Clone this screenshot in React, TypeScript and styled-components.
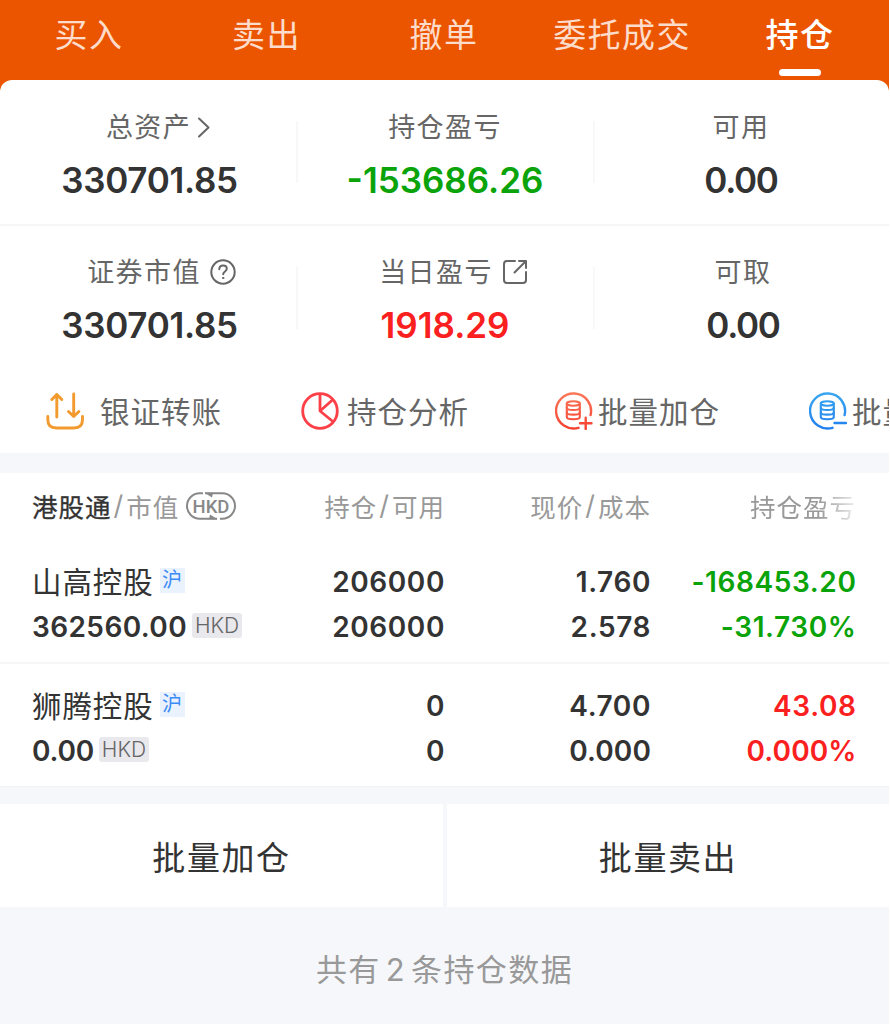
import React from "react";
import styled, { createGlobalStyle } from "styled-components";

const GlobalStyle = createGlobalStyle`
  * { box-sizing: border-box; }
  body { margin: 0; background: #fff; }
`;

const Page = styled.div`
  width: 889px;
  height: 1024px;
  overflow: hidden;
  display: flex;
  flex-direction: column;
  background: #f6f7fa;
  color: #333;
  font-family: Inter, "Noto Sans CJK SC", sans-serif;
  white-space: nowrap;
`;

const Tabs = styled.nav`
  height: 92px;
  flex: none;
  display: grid;
  grid-template-columns: 178px 177px 178px 178px 178px;
  background: #eb5500;
`;

const Tab = styled.div<{ $active?: boolean }>`
  display: flex;
  flex-direction: column;
  align-items: center;
  font-size: 33px;
  letter-spacing: 1.4px;
  line-height: 50px;
  padding-top: 10px;
  font-weight: ${(p) => (p.$active ? 500 : 400)};
  color: ${(p) => (p.$active ? "#fff" : "#fddccb")};
`;

const TabMark = styled.i`
  width: 42px;
  height: 7px;
  margin-top: 9px;
  border-radius: 4px;
  background: #fff;
`;

const Summary = styled.section`
  height: 373px;
  flex: none;
  margin-top: -12px;
  border-radius: 12px 12px 0 0;
  background: #fff;
`;

const StatRow = styled.div<{ $line?: boolean }>`
  height: ${(p) => (p.$line ? 146 : 145)}px;
  display: grid;
  grid-template-columns: 298px 297px 294px;
  border-bottom: ${(p) => (p.$line ? "2px solid #f6f6f7" : "none")};
`;

const Stat = styled.div<{ $left?: number; $right?: number; $top?: number }>`
  display: flex;
  flex-direction: column;
  align-items: center;
  padding: ${(p) => p.$top ?? 25}px ${(p) => p.$right ?? 0}px 0 ${(p) => p.$left ?? 0}px;
  background: linear-gradient(#f8f8f8, #f8f8f8) right 41px / 2px 62px no-repeat;
  &:last-child { background: none; }
`;

const StatLabel = styled.div<{ $offset?: number }>`
  display: flex;
  align-items: center;
  height: 44px;
  padding-left: ${(p) => p.$offset ?? 0}px;
  font-size: 27px;
  letter-spacing: 1.4px;
  color: #666;
  svg { flex: none; }
  span { padding-bottom: 3px; }
`;

const StatValue = styled.div<{ $tone?: string; $tight?: boolean }>`
  margin-top: 10px;
  line-height: 42px;
  font-size: 35px;
  font-weight: 600;
  letter-spacing: ${(p) => (p.$tight ? -1.3 : p.$tone ? 0 : -0.3)}px;
  color: ${(p) => p.$tone ?? "#333"};
`;

const Actions = styled.div`
  display: flex;
  height: 80px;
  padding-left: 46px;
  overflow: hidden;
`;

const Action = styled.div<{ $width: number; $gap: number }>`
  flex: none;
  width: ${(p) => p.$width}px;
  display: flex;
  align-items: center;
  gap: ${(p) => p.$gap}px;
  font-size: 29.5px;
  letter-spacing: 1px;
  color: #666;
  svg { flex: none; }
  span { padding-bottom: 2px; }
`;

const Holdings = styled.section`
  height: 314px;
  flex: none;
  margin-top: 20px;
  background: #fff;
`;

const HeadRow = styled.div`
  display: grid;
  grid-template-columns: 240px 173px 206px 205px;
  padding-left: 32px;
  height: 66px;
  align-items: center;
  font-size: 25.5px;
  letter-spacing: 1px;
  color: #999;
`;

const HeadCell = styled.div<{ $right?: boolean; $fade?: boolean }>`
  display: flex;
  align-items: center;
  padding-bottom: 1px;
  justify-content: ${(p) => (p.$right ? "flex-end" : "flex-start")};
  ${(p) => p.$fade && "mask-image: linear-gradient(to right, #000 82%, transparent 104%);"}
  b { font-weight: 400; color: #333; -webkit-text-stroke: 0.3px #333; }
  i { font-style: normal; font-size: 27px; padding: 0 2px; }
  svg { margin: 1px 0 0 7px; }
`;

const HoldingRow = styled.div`
  display: grid;
  grid-template-columns: 240px 173px 206px 205.5px;
  grid-template-rows: 45px 45px;
  align-items: center;
  padding: 20px 0 0 32px;
  height: 125px;
  border-bottom: 2px solid #f6f6f7;
  &:last-child {
    height: 123px;
    padding-top: 19px;
    border-bottom: 1px solid #f1f2f4;
  }
`;

const Amount = styled.div<{ $tone?: string; $tight?: boolean }>`
  text-align: right;
  font-size: 28px;
  font-weight: 600;
  letter-spacing: ${(p) => (p.$tight ? 0.1 : 0.6)}px;
  color: ${(p) => p.$tone ?? "#333"};
`;

const NameCell = styled.div`
  display: flex;
  align-items: center;
  font-size: 29.5px;
  letter-spacing: 0.9px;
  padding-bottom: 2px;
`;

const Name = styled.span`
  padding-bottom: 2px;
`;

const ValueCell = styled.div<{ $tight?: boolean }>`
  display: flex;
  align-items: center;
  font-size: 28px;
  font-weight: 600;
  letter-spacing: ${(p) => (p.$tight ? -0.2 : 0.4)}px;
`;

const Market = styled.span`
  width: 25px;
  height: 25px;
  margin-left: 6px;
  line-height: 24px;
  text-align: center;
  font-size: 20px;
  letter-spacing: 0;
  color: #3c8bf5;
  background: #e9f2fd;
`;

const Currency = styled.span`
  width: 50px;
  height: 25px;
  margin: 0 0 2px 5px;
  border-radius: 3px;
  line-height: 25px;
  text-align: center;
  font-size: 21px;
  font-weight: 300;
  letter-spacing: 0;
  color: #666;
  background: #e9e8ed;
`;

const Buttons = styled.div`
  flex: none;
  display: grid;
  grid-template-columns: 443px 442px;
  column-gap: 4px;
  height: 103px;
  margin-top: 17px;
`;

const BigButton = styled.div`
  display: flex;
  align-items: center;
  justify-content: center;
  padding-top: 1px;
  font-size: 33px;
  letter-spacing: 1.6px;
  background: #fff;
`;

const Footer = styled.footer`
  display: flex;
  justify-content: center;
  padding-top: 40px;
  line-height: 46px;
  font-size: 31px;
  letter-spacing: 1.4px;
  color: #999;
  span { padding: 0 5px; }
`;

const GREEN = "#0aa30a";
const RED = "#fb2020";

const Chevron = () => (
  <svg width="20" height="24" viewBox="-4 0 20 24" fill="none" stroke="#666" strokeWidth="2" strokeLinecap="round" strokeLinejoin="round">
    <path d="M4 3.500l9.500 9L4 21.500" />
  </svg>
);

const Help = () => (
  <svg width="35" height="26" viewBox="-9 0 35 26" fill="none" stroke="#666" strokeWidth="2" strokeLinecap="round">
    <circle cx="13" cy="13" r="11.700" />
    <path d="M9.300 10.200c0-2.300 1.600-3.800 3.800-3.800s3.700 1.400 3.700 3.400c0 2.600-3.600 2.900-3.600 5.400" />
    <circle cx="13.100" cy="19" r="0.700" fill="#666" strokeWidth="1" />
  </svg>
);

const Share = () => (
  <svg width="35" height="26" viewBox="-9 0 35 26" fill="none" stroke="#666" strokeWidth="2" strokeLinecap="round" strokeLinejoin="round">
    <path d="M13 2H5Q2 2 2 5v16q0 3 3 3h16q3 0 3-3v-8" />
    <path d="M17 2h7v7M24 2L12.500 13.500" />
  </svg>
);

const Transfer = () => (
  <svg width="38" height="38" viewBox="0 0 38 38" fill="none" stroke="#f29a2e" strokeWidth="2.900" strokeLinecap="round" strokeLinejoin="round">
    <path d="M1.800 24.500v3q0 8.500 8.500 8.500h17.700q8.500 0 8.500-8.500v-3" />
    <path d="M10.800 25V2.500M5.800 7.500l5-5 5 5M27.700 2v22.500M22.500 19.500l5.200 5 5.200-5" />
  </svg>
);

const Pie = () => (
  <svg width="38" height="38" viewBox="0 0 38 38" fill="none" stroke="#fb4048" strokeWidth="2.800" strokeLinejoin="round">
    <circle cx="19" cy="19" r="17.300" />
    <path d="M19 1.500V19L32.500 30M19 19L32 7.500" />
  </svg>
);

const Stack = ({ from, to, plus }: { from: string; to: string; plus?: boolean }) => (
  <svg width="38" height="38" viewBox="0 0 38 38" fill="none" stroke={`url(#stack-${plus ? "add" : "cut"})`} strokeWidth="2.400" strokeLinecap="round">
    <defs>
      <linearGradient id={`stack-${plus ? "add" : "cut"}`} gradientUnits="userSpaceOnUse" x1="0" y1="0" x2="0" y2="38">
        <stop offset="0" stopColor={from} />
        <stop offset="1" stopColor={to} />
      </linearGradient>
    </defs>
    <path d="M35.600 23A17.500 17.500 0 1 0 23.500 35.800" />
    <g strokeWidth="2.100">
      <ellipse cx="18.300" cy="11.500" rx="6.500" ry="2.200" />
      <path d="M11.800 11.500V25c0 3 13 3 13 0V11.500" />
      <path d="M11.800 15.800c0 3 13 3 13 0M11.800 20.400c0 3 13 3 13 0" />
    </g>
    <path d={plus ? "M25 31.300h11.500M30.700 25.600v11.400" : "M25.500 31.010L37 31"} />
  </svg>
);

const HkdSwitch = () => (
  <svg width="50" height="28" viewBox="0 0 50 28" fill="none" stroke="#888" strokeWidth="2">
    <path d="M17 1.300H13.700A12.700 12.700 0 0 0 13.700 26.700H31" />
    <path d="M34 26.700H36.300A12.700 12.700 0 0 0 36.300 1.300H19" />
    <path d="M18.500 0.800H27L26 5.500ZM31.500 27.200H23L24 22.500Z" fill="#888" stroke="none" />
    <text x="25" y="20.500" textAnchor="middle" fontFamily="Roboto" fontWeight="500" fontSize="18.500" fill="#888" stroke="none" letterSpacing="0">HKD</text>
  </svg>
);

export default function App() {
  return (
    <Page>
      <GlobalStyle />
      <Tabs>
        <Tab>买入</Tab>
        <Tab>卖出</Tab>
        <Tab>撤单</Tab>
        <Tab>委托成交</Tab>
        <Tab $active>持仓<TabMark /></Tab>
      </Tabs>
      <Summary>
        <StatRow $line>
          <Stat $left={1}>
            <StatLabel $offset={18}><span>总资产</span><Chevron /></StatLabel>
            <StatValue>330701.85</StatValue>
          </Stat>
          <Stat $right={3}>
            <StatLabel><span>持仓盈亏</span></StatLabel>
            <StatValue $tone={GREEN}>-153686.26</StatValue>
          </Stat>
          <Stat $right={2}>
            <StatLabel><span>可用</span></StatLabel>
            <StatValue $tight>0.00</StatValue>
          </Stat>
        </StatRow>
        <StatRow>
          <Stat $left={1} $top={24}>
            <StatLabel $offset={24}><span>证券市值</span><Help /></StatLabel>
            <StatValue>330701.85</StatValue>
          </Stat>
          <Stat $right={3} $top={24}>
            <StatLabel $offset={17}><span>当日盈亏</span><Share /></StatLabel>
            <StatValue $tone={RED}>1918.29</StatValue>
          </Stat>
          <Stat $left={2} $top={24}>
            <StatLabel><span>可取</span></StatLabel>
            <StatValue $tight>0.00</StatValue>
          </Stat>
        </StatRow>
        <Actions>
          <Action $width={255} $gap={16}><Transfer /><span>银证转账</span></Action>
          <Action $width={254} $gap={8}><Pie /><span>持仓分析</span></Action>
          <Action $width={254} $gap={5}><Stack plus from="#fb7a5c" to="#f5402f" /><span>批量加仓</span></Action>
          <Action $width={254} $gap={5}><Stack from="#3ba7f0" to="#1f7fee" /><span>批量卖出</span></Action>
        </Actions>
      </Summary>
      <Holdings>
        <HeadRow>
          <HeadCell><b>港股通</b><i>/</i>市值<HkdSwitch /></HeadCell>
          <HeadCell $right>持仓<i>/</i>可用</HeadCell>
          <HeadCell $right>现价<i>/</i>成本</HeadCell>
          <HeadCell $right $fade>持仓盈亏</HeadCell>
        </HeadRow>
        <HoldingRow>
          <NameCell><Name>山高控股</Name><Market>沪</Market></NameCell>
          <Amount>206000</Amount>
          <Amount>1.760</Amount>
          <Amount $tone={GREEN}>-168453.20</Amount>
          <ValueCell>362560.00<Currency>HKD</Currency></ValueCell>
          <Amount>206000</Amount>
          <Amount>2.578</Amount>
          <Amount $tone={GREEN}>-31.730%</Amount>
        </HoldingRow>
        <HoldingRow>
          <NameCell><Name>狮腾控股</Name><Market>沪</Market></NameCell>
          <Amount>0</Amount>
          <Amount>4.700</Amount>
          <Amount $tone={RED}>43.08</Amount>
          <ValueCell $tight>0.00<Currency>HKD</Currency></ValueCell>
          <Amount>0</Amount>
          <Amount $tight>0.000</Amount>
          <Amount $tone={RED} $tight>0.000%</Amount>
        </HoldingRow>
      </Holdings>
      <Buttons>
        <BigButton>批量加仓</BigButton>
        <BigButton>批量卖出</BigButton>
      </Buttons>
      <Footer>共有<span>2</span>条持仓数据</Footer>
    </Page>
  );
}
